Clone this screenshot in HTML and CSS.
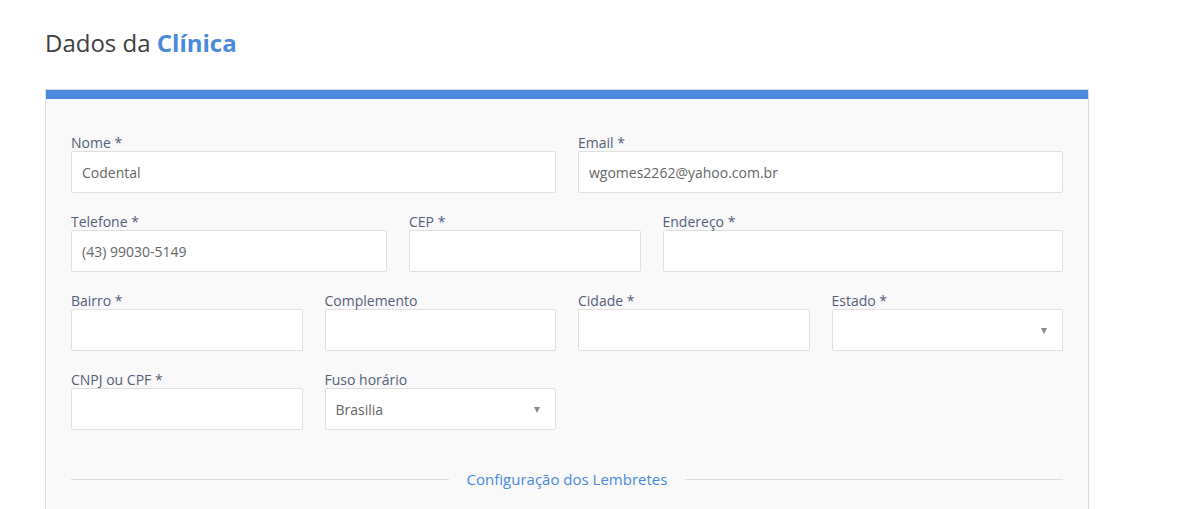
FILE: index.html
```html
<!DOCTYPE html>
<html lang="pt-BR">
<head>
<meta charset="utf-8">
<title>Dados da Clínica</title>
<link rel="stylesheet" href="styles.css">
</head>
<body>
<main class="page">
  <h1 class="title">Dados da <strong>Clínica</strong></h1>
  <section class="card">
    <div class="card-bar"></div>
    <form class="card-body">
      <div class="grid">
        <div class="field span-6">
          <label>Nome *</label>
          <input class="control" type="text" value="Codental">
        </div>
        <div class="field span-6">
          <label>Email *</label>
          <input class="control" type="text" value="wgomes2262@yahoo.com.br">
        </div>

        <div class="field span-4">
          <label>Telefone *</label>
          <input class="control" type="text" value="(43) 99030-5149">
        </div>
        <div class="field span-3">
          <label>CEP *</label>
          <input class="control" type="text" value="">
        </div>
        <div class="field span-5">
          <label>Endereço *</label>
          <input class="control" type="text" value="">
        </div>

        <div class="field span-3">
          <label>Bairro *</label>
          <input class="control" type="text" value="">
        </div>
        <div class="field span-3">
          <label>Complemento</label>
          <input class="control" type="text" value="">
        </div>
        <div class="field span-3">
          <label>Cidade *</label>
          <input class="control" type="text" value="">
        </div>
        <div class="field span-3">
          <label>Estado *</label>
          <div class="select-wrap">
            <select class="control select"><option></option></select>
          </div>
        </div>

        <div class="field span-3">
          <label>CNPJ ou CPF *</label>
          <input class="control" type="text" value="">
        </div>
        <div class="field span-3">
          <label>Fuso horário</label>
          <div class="select-wrap">
            <select class="control select"><option>Brasilia</option></select>
          </div>
        </div>
      </div>

      <div class="divider"><span>Configuração dos Lembretes</span></div>
    </form>
  </section>
</main>
</body>
</html>
```

FILE: styles.css
```css
* { box-sizing: border-box; }

html, body {
  margin: 0;
  padding: 0;
  background: #ffffff;
  font-family: "Open Sans", "Liberation Sans", sans-serif;
}

.page {
  padding: 26px 0 0 45px;
}

.title {
  margin: 0 0 30px 0;
  font-size: 24px;
  line-height: 33px;
  font-weight: 400;
  color: #404040;
}

.title strong {
  font-weight: 700;
  color: #4a89dc;
}

.card {
  width: 1044px;
  background: #f9f9f9;
  border: 1px solid #dddddd;
  height: 430px;
}

.card-bar {
  height: 9px;
  background: #4a89dc;
}

.card-body {
  padding: 35px 25px 0 25px;
  margin: 0;
}

.grid {
  display: grid;
  grid-template-columns: repeat(12, 1fr);
  column-gap: 22px;
  row-gap: 20px;
}

.span-3 { grid-column: span 3; }
.span-4 { grid-column: span 4; }
.span-5 { grid-column: span 5; }
.span-6 { grid-column: span 6; }

.field label {
  display: block;
  font-size: 14px;
  line-height: 17px;
  color: #56607a;
}

.control {
  display: block;
  width: 100%;
  height: 42px;
  margin: 0;
  padding: 0 10px;
  font-family: "Open Sans", "Liberation Sans", sans-serif;
  font-size: 14px;
  color: #666666;
  background: #ffffff;
  border: 1px solid #e0e0e0;
  border-radius: 2px;
  outline: none;
}

.select-wrap {
  position: relative;
}

.select {
  -webkit-appearance: none;
  appearance: none;
}

.select-wrap::after {
  content: "";
  position: absolute;
  right: 16px;
  top: 19px;
  width: 0;
  height: 0;
  border-left: 3.5px solid transparent;
  border-right: 3.5px solid transparent;
  border-top: 6px solid #8a8a8a;
  pointer-events: none;
}

.divider {
  display: flex;
  align-items: center;
  gap: 18px;
  margin-top: 39px;
  font-size: 15px;
  line-height: 20px;
  color: #4a89dc;
}

.divider::before,
.divider::after {
  content: "";
  flex: 1;
  height: 1px;
  background: #dddddd;
}
```
